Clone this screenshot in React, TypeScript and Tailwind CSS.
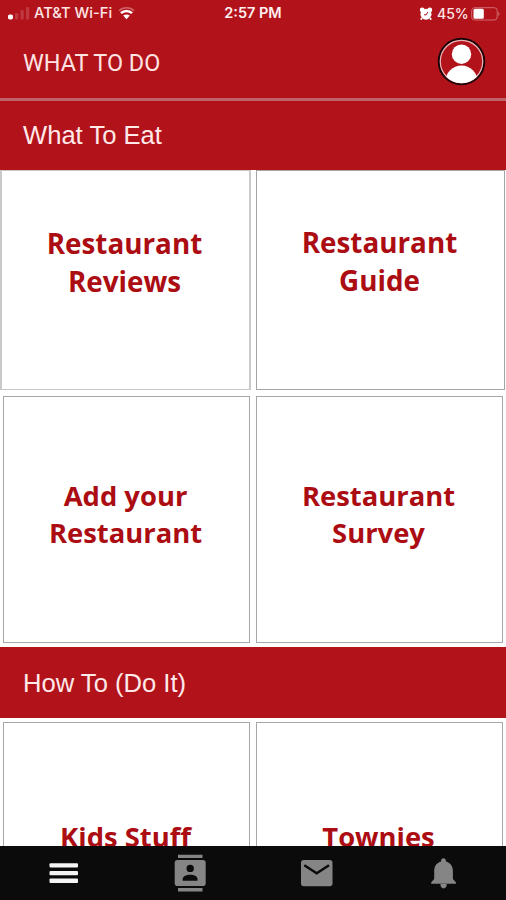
import React from "react";

function StatusBar() {
  return (
    <div className="grid h-[27px] grid-cols-3 items-center font-['Inter',sans-serif] text-[14px] leading-none font-medium text-[#ffe6e6]">
      <div className="flex items-center pl-[7px]">
        <svg className="h-[14px] w-[23px] shrink-0" viewBox="0 0 23 14">
          <rect x="1" y="8.5" width="5" height="5" rx="1.8" fill="#fff" />
          <rect x="8" y="7" width="3.2" height="6.5" rx="1" fill="#c0383f" />
          <rect x="13.5" y="4" width="3.2" height="9.5" rx="1" fill="#c0383f" />
          <rect x="19" y="1" width="3.2" height="12.5" rx="1" fill="#c0383f" />
        </svg>
        <span className="ml-[4px] w-[79px] text-[14.7px] whitespace-nowrap">AT&amp;T Wi-Fi</span>
        <svg className="ml-[5px] h-[14px] w-[17px] shrink-0" viewBox="0 0 17 14" fill="none">
          <path d="M1 4.7C5 .8 12 .8 16 4.7" stroke="#d06468" strokeWidth="1.5" />
          <path d="M3 7.2C6 4.2 11 4.2 14 7.2" stroke="#fff" strokeWidth="2.6" />
          <path d="M5.2 9.6C7 8 10 8 11.8 9.6L8.5 13.3Z" fill="#fff" />
        </svg>
      </div>
      <div className="text-center text-[14.5px] font-semibold text-[#fff0f0]">2:57 PM</div>
      <div className="flex items-center justify-end pr-[5px]">
        <svg className="h-[14px] w-[14px] shrink-0" viewBox="0 0 14 14">
          <circle cx="3.2" cy="3" r="2.4" fill="#fff" />
          <circle cx="10.8" cy="3" r="2.4" fill="#fff" />
          <circle cx="7" cy="7.2" r="5.5" fill="#fff" />
          <path d="M3 11l-1.2 1.6M11 11l1.2 1.6" stroke="#fff" strokeWidth="1.8" />
          <path d="M5 7.8H7.2L8.8 5" fill="none" stroke="#b2131b" strokeWidth="1" />
        </svg>
        <span className="ml-[4px] w-[31px] whitespace-nowrap">45%</span>
        <svg className="ml-[3px] h-[14px] w-[30px] shrink-0" viewBox="0 0 30 14">
          <rect x=".7" y=".7" width="25.5" height="12.3" rx="3" fill="none" stroke="#d06a6f" strokeWidth="1" />
          <rect x="2.5" y="1.8" width="10.3" height="10" rx="1.5" fill="#fff" />
          <path d="M27.5 4.8q2 2.2 0 4.4z" fill="#d98286" />
        </svg>
      </div>
    </div>
  );
}

function SectionTitle({ children, className }: { children: string; className: string }) {
  return (
    <h2 className={`flex shrink-0 items-center bg-[#b2131b] pl-[23px] font-['Liberation_Sans',Arial,sans-serif] text-[25.6px] leading-none text-[#ffe9e9] ${className}`}>
      {children}
    </h2>
  );
}

function Tile({ lines, className }: { lines: string[]; className: string }) {
  return (
    <div className={`shrink-0 bg-white pr-[2px] text-center font-['Open_Sans',sans-serif] font-bold whitespace-nowrap text-[#ab0d13] ${className}`}>
      {lines.map((line) => (
        <div key={line}>{line}</div>
      ))}
    </div>
  );
}

function BottomNav() {
  return (
    <nav className="grid h-[54px] shrink-0 grid-cols-4 place-items-center bg-[#0b0b0b]">
      <svg className="h-[38px] w-[38px]" viewBox="0 0 38 38" fill="#f5f5f5">
        <rect x="5.5" y="9.2" width="28.5" height="4.3" rx="1" />
        <rect x="5.5" y="17" width="28.5" height="4.3" rx="1" />
        <rect x="5.5" y="24.6" width="28.5" height="4.3" rx="1" />
      </svg>
      <svg className="h-[38px] w-[38px]" viewBox="0 0 38 38">
        <path d="M7 0.7h24.5v3.3H7zM7 34.1h24.5v3.3H7z" fill="#858585" />
        <rect x="3.7" y="6" width="31" height="26" rx="2.8" fill="#858585" />
        <circle cx="19.2" cy="14.4" r="3.7" fill="#0b0b0b" />
        <path d="M11.7 26.7v-1.6c0-3.1 4.3-4.3 7.5-4.3s7.3 1.2 7.3 4.3v1.6z" fill="#0b0b0b" />
      </svg>
      <svg className="h-[38px] w-[38px]" viewBox="0 0 38 38">
        <rect x="4" y="6" width="31.5" height="26.3" rx="2.8" fill="#858585" />
        <path d="M7.3 11.2L19.7 19.2L32 11.2" fill="none" stroke="#0b0b0b" strokeWidth="2.5" />
      </svg>
      <svg className="h-[38px] w-[38px]" viewBox="0 0 38 38" fill="#858585">
        <path d="M19.5 4.3c-1.5 0-2.4 1-2.4 2.3v1C12.5 8.9 10.2 12.5 10.2 17v8l-3 3.2v1.6h24.7v-1.6l-3-3.2v-8c0-4.5-2.4-8.1-7-9.4v-1c0-1.3-.9-2.3-2.4-2.3zM16.5 29.5h6.2v1.5c0 1.8-1.2 3.4-3.1 3.4s-3.1-1.6-3.1-3.4z" />
      </svg>
    </nav>
  );
}

export default function App() {
  return (
    <div className="flex h-[900px] w-[506px] flex-col overflow-hidden bg-white">
      <header className="h-[101px] shrink-0 border-b-[3px] border-[#bf6267] bg-[#b2131b]">
        <StatusBar />
        <div className="flex h-[70px] items-center justify-between pr-[20px] pl-[23px]">
          <h1 className="pt-[3px] font-['Roboto',sans-serif] text-[23.4px] leading-none font-normal text-[#ffe3e3]">WHAT TO DO</h1>
          <svg className="h-[50px] w-[50px]" viewBox="0 0 50 50">
            <defs>
              <clipPath id="avatar"><circle cx="25.5" cy="24.5" r="21.7" /></clipPath>
            </defs>
            <circle cx="25.5" cy="24.5" r="22.8" fill="#b2131b" stroke="#180608" strokeWidth="2" />
            <circle cx="25.5" cy="24.5" r="21.2" fill="none" stroke="#e7b4b7" strokeWidth="1.2" />
            <circle cx="25.5" cy="17.2" r="9.7" fill="#fff" />
            <ellipse cx="25.5" cy="44.5" rx="16" ry="16" fill="#fff" clipPath="url(#avatar)" />
          </svg>
        </div>
      </header>
      <main className="flex min-h-0 flex-1 flex-col overflow-hidden">
        <SectionTitle className="h-[69px]">What To Eat</SectionTitle>
        <div className="flex h-[226px] shrink-0 gap-[5px]">
          <Tile lines={["Restaurant", "Reviews"]} className="h-[220px] w-[251px] border-2 border-y border-[#c9c9c9] pt-[53px] text-[27.8px] leading-[38px]" />
          <Tile lines={["Restaurant", "Guide"]} className="h-[220px] w-[249px] border border-[#a5a5a5] pt-[52px] text-[27.8px] leading-[38px]" />
        </div>
        <div className="flex h-[251px] shrink-0 gap-[6px] pl-[3px]">
          <Tile lines={["Add your", "Restaurant"]} className="h-[247px] w-[247px] border border-[#a5a8aa] pt-[80px] text-[27.4px] leading-[37px]" />
          <Tile lines={["Restaurant", "Survey"]} className="h-[247px] w-[247px] border border-[#a5a8aa] pt-[80px] text-[27.4px] leading-[37px]" />
        </div>
        <SectionTitle className="h-[71px] pt-[2px]">How To (Do It)</SectionTitle>
        <div className="flex shrink-0 gap-[6px] pt-[4px] pl-[3px]">
          <Tile lines={["Kids Stuff"]} className="h-[247px] w-[247px] border border-[#a5a8aa] pt-[95px] text-[27.4px] leading-[38px]" />
          <Tile lines={["Townies"]} className="h-[247px] w-[247px] border border-[#a5a8aa] pt-[95px] text-[27.4px] leading-[38px]" />
        </div>
      </main>
      <BottomNav />
    </div>
  );
}
